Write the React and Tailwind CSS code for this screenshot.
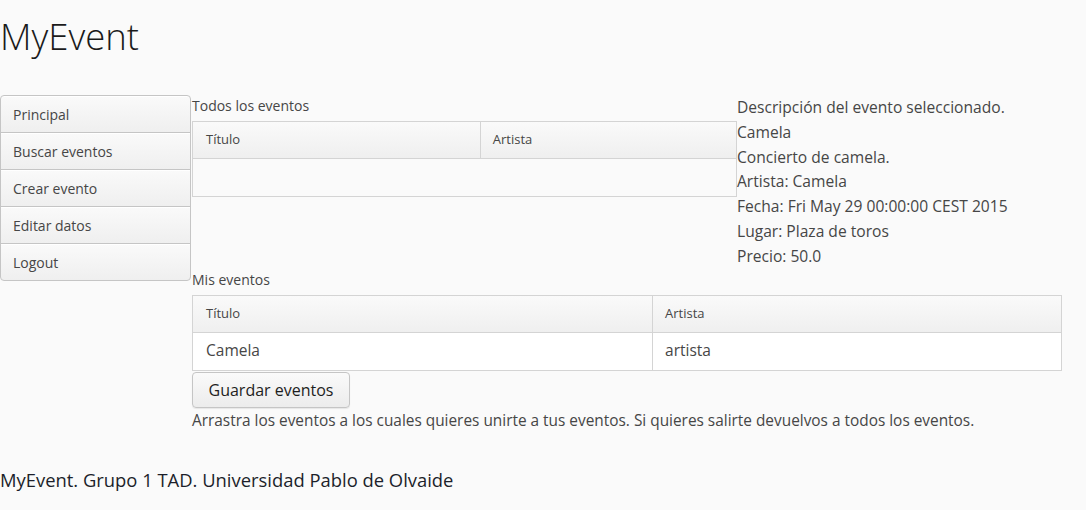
import React from "react";

const menu = ["Principal", "Buscar eventos", "Crear evento", "Editar datos", "Logout"];

const details = [
  "Descripción del evento seleccionado.",
  "Camela",
  "Concierto de camela.",
  "Artista: Camela",
  "Fecha: Fri May 29 00:00:00 CEST 2015",
  "Lugar: Plaza de toros",
  "Precio: 50.0",
];

function EventTable({ rows }) {
  return (
    <div className="border border-[#d4d4d4] bg-[#fafafa]">
      <div className="flex h-[37px] items-center border-b border-[#d4d4d4] bg-gradient-to-b from-[#fafafa] to-[#efefef] text-[13px] text-[#464646]">
        <div className="flex h-full w-[53%] items-center border-r border-[#d4d4d4] pl-[13px]">Título</div>
        <div className="flex h-full flex-1 items-center pl-[12px]">Artista</div>
      </div>
      {rows.length === 0 ? (
        <div className="h-[37px]" />
      ) : (
        rows.map((r) => (
          <div key={r.titulo} className="flex h-[37px] bg-white text-[15.5px] text-[#464646]">
            <div className="flex w-[53%] items-center border-r border-[#d4d4d4] pl-[13px]">{r.titulo}</div>
            <div className="flex flex-1 items-center pl-[12px]">{r.artista}</div>
          </div>
        ))
      )}
    </div>
  );
}

export default function App() {
  return (
    <div
      className="min-h-[510px] w-[1086px] bg-[#fafafa] text-[#464646]"
      style={{ fontFamily: '"Open Sans", "Liberation Sans", sans-serif' }}
    >
      <h1 className="pt-[12px] text-[36.5px] font-light leading-[48px] text-[#1a1a1a]">MyEvent</h1>

      <div className="mt-[35px] flex">
        <div className="flex w-[191px] shrink-0 flex-col self-start">
          {menu.map((m, i) => (
            <button
              key={m}
              className={
                "flex h-[38px] items-center border border-[#c5c5c5] bg-gradient-to-b from-[#fafafa] to-[#efefef] pl-[12px] text-left text-[14px] text-[#464646] shadow-[inset_0_1px_0_#fff] " +
                (i === 0 ? "rounded-t-[4px]" : "-mt-px") +
                (i === menu.length - 1 ? " rounded-b-[4px]" : "")
              }
            >
              {m}
            </button>
          ))}
        </div>

        <div className="ml-px flex-1">
          <div className="flex">
            <div className="w-[545px]">
              <div className="pb-[4px] text-[14px] leading-[22px]">Todos los eventos</div>
              <EventTable rows={[]} />
            </div>
            <div className="text-[15.6px] leading-[24.8px]">
              {details.map((d) => (
                <div key={d}>{d}</div>
              ))}
            </div>
          </div>

          <div className="pb-[4px] text-[14px] leading-[22px]">Mis eventos</div>
          <div className="w-[870px]">
            <EventTable rows={[{ titulo: "Camela", artista: "artista" }]} />
          </div>

          <button className="mt-px h-[36px] w-[158px] rounded-[4px] border border-[#c5c5c5] bg-gradient-to-b from-[#fafafa] to-[#ececec] text-[16px] text-[#1e1e1e] shadow-[0_1px_1px_rgba(0,0,0,0.08)]">
            Guardar eventos
          </button>

          <p className="text-[15.4px] leading-[25px]">
            Arrastra los eventos a los cuales quieres unirte a tus eventos. Si quieres salirte devuelvos a todos los eventos.
          </p>
        </div>
      </div>

      <div className="mt-[34px] text-[18.4px] leading-[26px] text-[#1c1f2a]">
        MyEvent. Grupo 1 TAD. Universidad Pablo de Olvaide
      </div>
    </div>
  );
}
